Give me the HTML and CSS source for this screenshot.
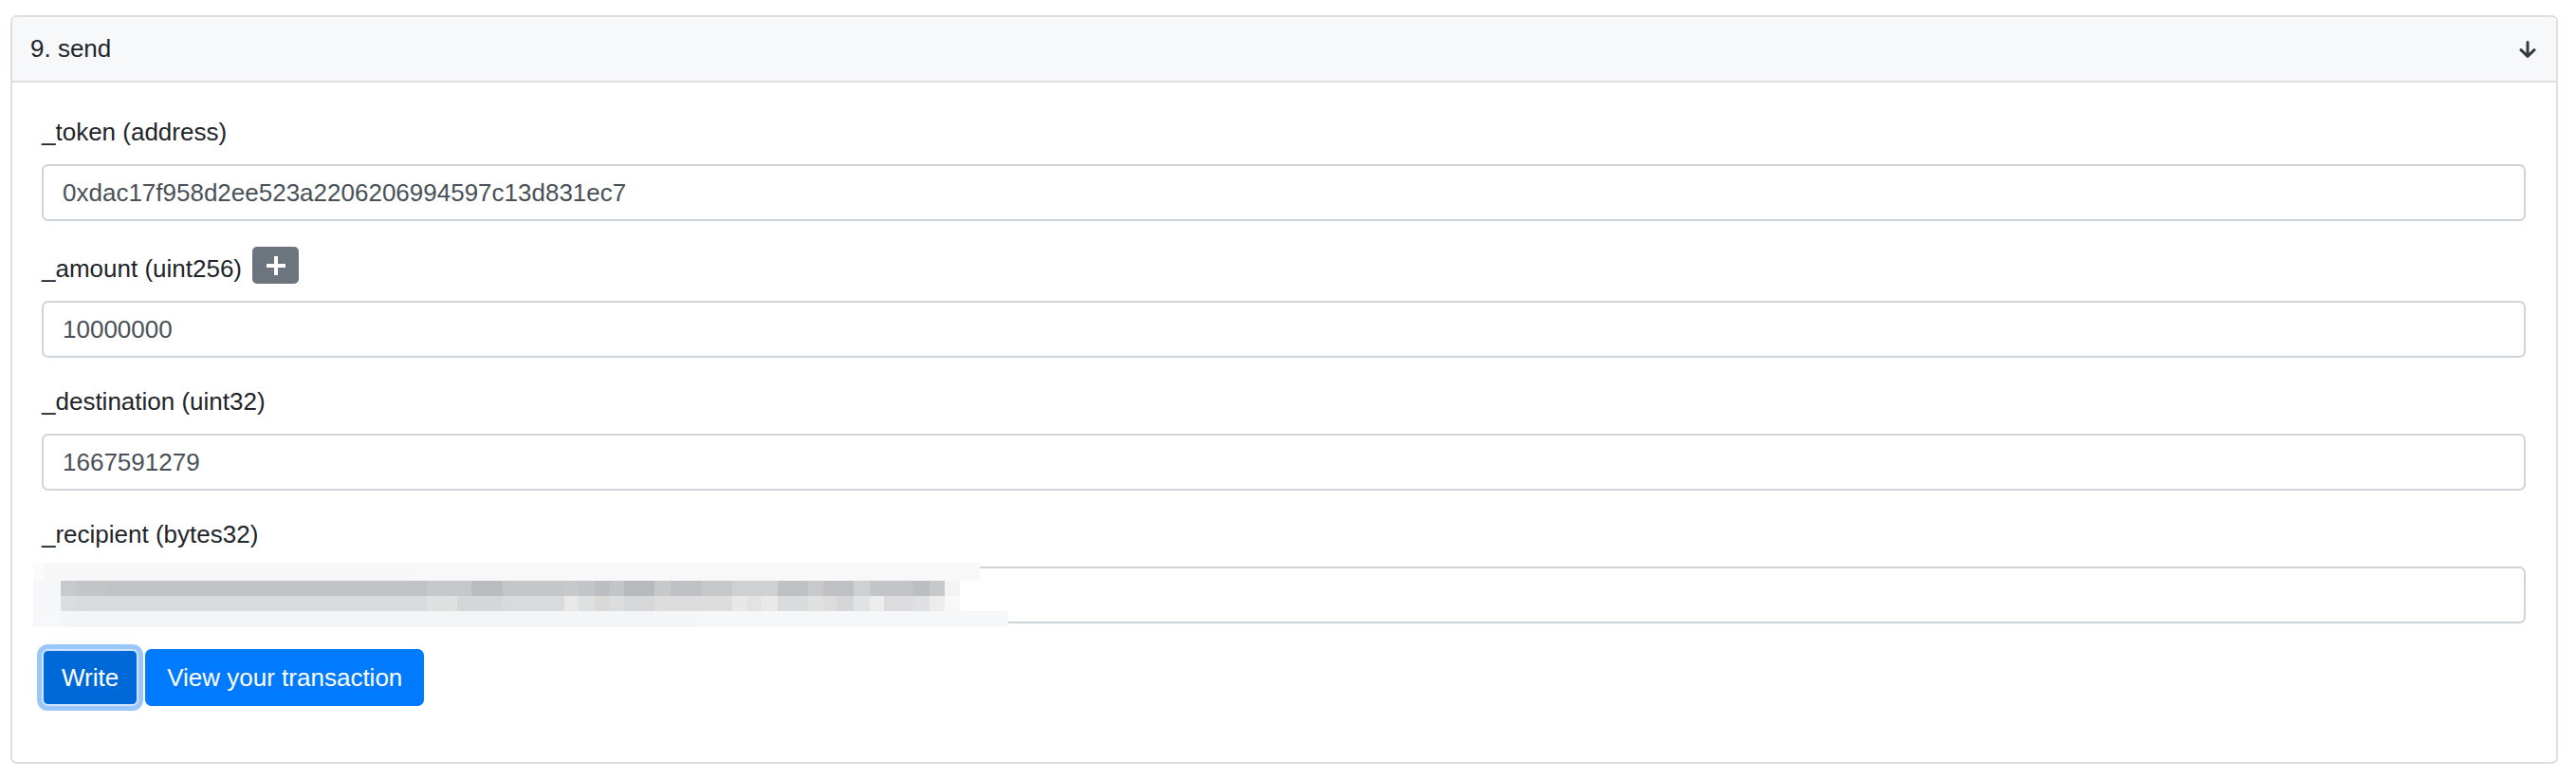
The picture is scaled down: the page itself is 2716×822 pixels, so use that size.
FILE: index.html
```html
<!DOCTYPE html>
<html lang="en">
<head>
<meta charset="utf-8">
<title>send</title>
<link rel="stylesheet" href="styles.css">
</head>
<body>
<div class="page">
  <div class="card">
    <div class="card-header">
      <span class="title">9. send</span>
      <svg class="arrow" width="18" height="18" viewBox="0 0 18 18" aria-hidden="true">
        <path d="M9 1.5V16.2M2 9.6L9 16.4L16 9.6" fill="none" stroke="#343a40" stroke-width="3" stroke-linecap="round" stroke-linejoin="round"/>
      </svg>
    </div>
    <div class="card-body">
      <div class="group">
        <label class="label">_token (address)</label>
        <input class="input" type="text" value="0xdac17f958d2ee523a2206206994597c13d831ec7">
      </div>
      <div class="group">
        <div class="label-row">
          <label class="label label-inline">_amount (uint256)</label>
          <button class="btn-plus" type="button" aria-label="add">
            <svg width="20" height="20" viewBox="0 0 20 20" aria-hidden="true">
              <path d="M10 1V19M1 10H19" fill="none" stroke="#ffffff" stroke-width="4" stroke-linecap="round"/>
            </svg>
          </button>
        </div>
        <input class="input" type="text" value="10000000">
      </div>
      <div class="group">
        <label class="label">_destination (uint32)</label>
        <input class="input" type="text" value="1667591279">
      </div>
      <div class="group">
        <label class="label">_recipient (bytes32)</label>
        <div class="field">
          <input class="input" type="text" value="">
          <div class="redact">
            <div class="r r-a"></div>
            <div class="r r-b"></div>
            <div class="r r-c"></div>
            <div class="r r-d"></div>
          </div>
        </div>
      </div>
      <div class="actions">
        <button class="btn btn-write" type="button">Write</button>
        <button class="btn btn-view" type="button">View your transaction</button>
      </div>
    </div>
  </div>
</div>
</body>
</html>
```
FILE: styles.css
```css
html, body {
  margin: 0;
  padding: 0;
  background: #ffffff;
}

body {
  font-family: "Liberation Sans", Helvetica, Arial, sans-serif;
  font-size: 26px;
  color: #212529;
}

.page {
  padding: 16px 19px 0 11px;
}

.card {
  border: 2px solid #dfdfdf;
  border-radius: 6.5px;
  background: #ffffff;
}

.card-header {
  display: flex;
  align-items: center;
  justify-content: space-between;
  padding: 14px 21px 14px 19px;
  line-height: 39px;
  background: #f7f8f9;
  border-bottom: 2px solid #dfdfdf;
  border-radius: 4.5px 4.5px 0 0;
}

.title {
  color: #212529;
}

.arrow {
  display: block;
}

.card-body {
  padding: 33px 32px 59px 31px;
}

.group {
  margin-bottom: 27px;
}

.label {
  display: block;
  line-height: 39px;
  margin-bottom: 14px;
  color: #212529;
}

.label-row {
  display: flex;
  align-items: flex-start;
  margin-bottom: 14px;
}

.label-inline {
  margin-bottom: 0;
  padding-top: 4px;
}

.btn-plus {
  margin-left: 11px;
  width: 49px;
  height: 39px;
  padding: 0;
  border: none;
  border-radius: 5px;
  background: #6c757d;
  display: flex;
  align-items: center;
  justify-content: center;
}

.btn-plus svg {
  display: block;
}

.input {
  display: block;
  box-sizing: border-box;
  width: 100%;
  height: 60px;
  margin: 0;
  padding: 0 20px;
  border: 2px solid #ced4da;
  border-radius: 6.5px;
  background: #ffffff;
  font-family: "Liberation Sans", Helvetica, Arial, sans-serif;
  font-size: 26px;
  color: #495057;
  outline: none;
}

.field {
  position: relative;
}

.redact {
  position: absolute;
  left: -9px;
  top: -4px;
  width: 1028px;
  height: 68px;
  display: flex;
  flex-direction: column;
}

.r {
  flex: none;
}

.r-a {
  height: 19px;
  width: 998px;
  background: linear-gradient(to right, #fafbfc 0 12px, #f7f7f7 12px 400px, #f8f8f8 400px 998px);
}

.r-b {
  height: 16px;
  width: 977px;
  background: linear-gradient(to right,
    #f6f7f8 0 29px,
    #c8c9cc 29px 45px,
    #c4c5c8 45px 62px,
    #c2c4c6 62px 78px,
    #c0c3c6 78px 415px,
    #c6c7ca 415px 462px,
    #b9bbbe 462px 495px,
    #c4c6c8 495px 560px,
    #c7c8ca 560px 575px,
    #c3c6c9 575px 592px,
    #bcbec1 592px 608px,
    #c2c5c8 608px 623px,
    #b7babd 623px 655px,
    #c7c8ca 655px 672px,
    #c0c1c4 672px 705px,
    #c6c7c9 705px 737px,
    #ced0d2 737px 785px,
    #bec1c4 785px 817px,
    #c8c9cb 817px 833px,
    #bfc0c3 833px 865px,
    #cfd0d2 865px 882px,
    #c3c4c7 882px 928px,
    #bcbfc1 928px 945px,
    #c6c8ca 945px 961px,
    #f3f3f3 961px 977px);
}

.r-c {
  height: 16px;
  width: 977px;
  background: linear-gradient(to right,
    #f6f7f8 0 29px,
    #dcdde0 29px 45px,
    #d9dadd 45px 62px,
    #dadbde 62px 415px,
    #dfe0e0 415px 447px,
    #d5d6d8 447px 495px,
    #d9dadc 495px 560px,
    #e8e8e9 560px 575px,
    #dfe0e1 575px 592px,
    #d9dad8 592px 608px,
    #dcdddf 608px 623px,
    #d6d7d8 623px 655px,
    #dcdddc 655px 737px,
    #e8e8e8 737px 752px,
    #e3e3e4 752px 768px,
    #e8e9e8 768px 785px,
    #dadbdd 785px 817px,
    #dfe0e0 817px 833px,
    #dcdcdd 833px 848px,
    #d5d6d8 848px 865px,
    #e1e2e3 865px 882px,
    #ececec 882px 897px,
    #dcdcde 897px 928px,
    #dfe0e1 928px 945px,
    #ececec 945px 961px,
    #f8f8f8 961px 977px);
}

.r-d {
  height: 17px;
  width: 1028px;
  background: linear-gradient(to right, #f7f8f9 0 30px, #f3f5f7 30px 700px, #f6f7f8 700px 1028px);
}

.actions {
  display: flex;
  gap: 7px;
}

.btn {
  box-sizing: border-box;
  height: 60px;
  margin: 0;
  border: 2px solid #007bff;
  border-radius: 6.5px;
  background: #007bff;
  color: #ffffff;
  font-family: "Liberation Sans", Helvetica, Arial, sans-serif;
  font-size: 26px;
  line-height: 1;
  cursor: pointer;
}

.btn-write {
  padding: 0 19px;
  background: #0069d9;
  border-color: #cfe3fc;
  box-shadow: 0 0 0 5px #99c7fc;
}

.btn-view {
  padding: 0 21px;
}
```
